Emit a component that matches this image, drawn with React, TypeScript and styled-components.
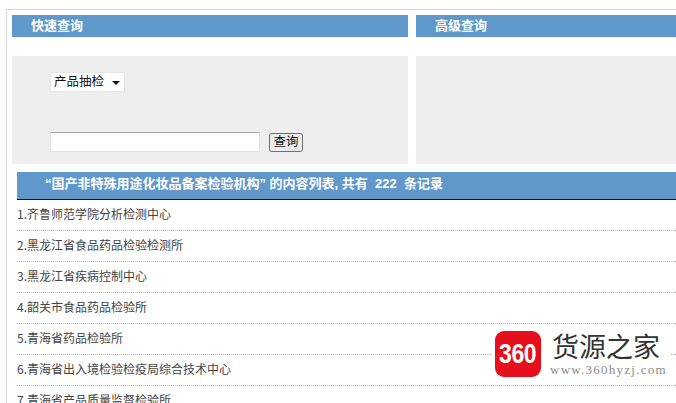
import React from "react";
import styled, { createGlobalStyle } from "styled-components";

const Global = createGlobalStyle`
  html, body { margin: 0; padding: 0; background: #fff; overflow: hidden; }
  body { width: 676px; height: 403px; font-family: "Noto Sans CJK SC", sans-serif; }
`;
const Page = styled.div`
  position: relative;
  width: 676px;
  height: 403px;
  overflow: hidden;
`;
const Frame = styled.div`
  margin: 9px 0 0 6px;
  width: 720px;
  height: 400px;
  box-sizing: border-box;
  border-top: 1px solid #d4d4d4;
  border-left: 1px solid #d9d9d9;
  padding: 5px 0 0 5px;
`;
const Columns = styled.div`
  display: grid;
  grid-template-columns: 396px 300px;
  column-gap: 8px;
`;
const Column = styled.div`
  display: flex;
  flex-direction: column;
`;
const PanelTitle = styled.div`
  height: 22px;
  background: #6198cc;
  color: #fff;
  font-size: 13px;
  font-weight: 700;
  line-height: 19px;
  padding-left: 19px;
`;
const PanelBody = styled.div`
  margin-top: 19px;
  height: 108px;
  background: #eeeeee;
  box-sizing: border-box;
  padding: 16px 0 0 38px;
  display: flex;
  flex-direction: column;
`;
const SelectBox = styled.div`
  width: 75px;
  height: 20px;
  box-sizing: border-box;
  background: #fff;
  border: 1px solid #e6e6e6;
  display: flex;
  align-items: center;
  justify-content: space-between;
  padding: 0 4px 3px 3px;
  font-size: 12.5px;
  color: #111;
`;
const Caret = styled.span`
  width: 0;
  height: 0;
  margin-top: 4px;
  border-left: 4px solid transparent;
  border-right: 4px solid transparent;
  border-top: 4px solid #111;
`;
const SearchRow = styled.div`
  margin-top: 40px;
  display: flex;
  align-items: center;
  gap: 9px;
`;
const SearchInput = styled.div`
  width: 210px;
  height: 20px;
  box-sizing: border-box;
  background: #fff;
  border: 1px solid #e2e2e2;
  border-top-color: #a8a8a8;
`;
const SearchButton = styled.div`
  width: 34px;
  height: 19px;
  box-sizing: border-box;
  border: 1px solid #707070;
  border-radius: 3px;
  background: #ececec;
  color: #111;
  font-size: 12.5px;
  line-height: 14px;
  text-align: center;
`;
const ListSection = styled.div`
  margin: 8px 0 0 5px;
`;
const ListHeader = styled.div`
  height: 27px;
  background: #6198cc;
  border-bottom: 1px solid #111;
  color: #fff;
  font-family: "Liberation Sans", "Noto Sans CJK SC", sans-serif;
  font-size: 13px;
  font-weight: 700;
  line-height: 24px;
  padding-left: 28px;
  white-space: pre;
`;
const Row = styled.div`
  height: 30px;
  border-bottom: 1px dotted #b4b4b4;
  color: #444;
  font-size: 12px;
  line-height: 28px;
  white-space: nowrap;
`;
const Watermark = styled.div`
  position: absolute;
  left: 493px;
  top: 324px;
  width: 178px;
  height: 60px;
  background: rgba(255, 255, 255, 0.94);
  display: flex;
  align-items: center;
  padding-left: 2px;
  box-sizing: border-box;
  gap: 11px;
`;
const Badge = styled.div`
  width: 46px;
  height: 46px;
  border-radius: 9px;
  background: #e60f1c;
  flex: none;
  display: flex;
  align-items: center;
  justify-content: center;
`;
const BadgeText = styled.span`
  display: block;
  color: #fff;
  font-family: "Liberation Sans", sans-serif;
  font-size: 28px;
  font-weight: 700;
  letter-spacing: -0.5px;
  transform: scaleX(0.82);
`;
const Brand = styled.div`
  display: flex;
  flex-direction: column;
  margin-top: -1px;
`;
const BrandName = styled.div`
  color: #333;
  font-size: 27px;
  line-height: 32px;
  height: 32px;
  white-space: nowrap;
`;
const BrandUrl = styled.div`
  color: #8b8b8b;
  font-family: "Liberation Serif", serif;
  font-size: 13px;
  letter-spacing: 1.25px;
  line-height: 15px;
  margin-left: -2px;
  white-space: nowrap;
`;

const rows = [
  "1.齐鲁师范学院分析检测中心",
  "2.黑龙江省食品药品检验检测所",
  "3.黑龙江省疾病控制中心",
  "4.韶关市食品药品检验所",
  "5.青海省药品检验所",
  "6.青海省出入境检验检疫局综合技术中心",
  "7.青海省产品质量监督检验所",
];

export default function App() {
  return (
    <Page>
      <Global />
      <Frame>
        <Columns>
          <Column>
            <PanelTitle>快速查询</PanelTitle>
            <PanelBody>
              <SelectBox>
                产品抽检
                <Caret />
              </SelectBox>
              <SearchRow>
                <SearchInput />
                <SearchButton>查询</SearchButton>
              </SearchRow>
            </PanelBody>
          </Column>
          <Column>
            <PanelTitle>高级查询</PanelTitle>
            <PanelBody />
          </Column>
        </Columns>
        <ListSection>
          <ListHeader>“国产非特殊用途化妆品备案检验机构” 的内容列表, 共有  222  条记录</ListHeader>
          {rows.map((r) => (
            <Row key={r}>{r}</Row>
          ))}
        </ListSection>
      </Frame>
      <Watermark>
        <Badge>
          <BadgeText>360</BadgeText>
        </Badge>
        <Brand>
          <BrandName>货源之家</BrandName>
          <BrandUrl>www.360hyzj.com</BrandUrl>
        </Brand>
      </Watermark>
    </Page>
  );
}
